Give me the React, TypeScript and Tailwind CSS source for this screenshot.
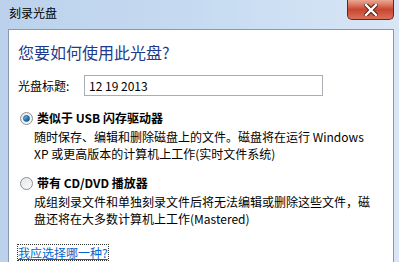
const font = { fontFamily: '"Noto Sans CJK SC", "Microsoft YaHei", sans-serif' }

function Radio({ checked }: { checked?: boolean }) {
  return (
    <div className="w-[13px] h-[13px] rounded-full border border-[#8a8f96] bg-gradient-to-br from-[#e4e6e8] to-[#fbfbfb] flex items-center justify-center shrink-0">
      {checked && (
        <div className="w-[7px] h-[7px] rounded-full bg-gradient-to-br from-[#8fd0f0] via-[#2a82c4] to-[#0e4f8a] border border-[#1d5b8f]" />
      )}
    </div>
  )
}

function CloseButton() {
  return (
    <div className="absolute top-0 right-[5px] w-[47px] h-[20px] rounded-b-[5px] border border-t-0 border-[#5a2a24] bg-gradient-to-b from-[#e9a895] via-[#c9452e] to-[#d9705b] flex items-center justify-center">
      <svg width="14" height="12" viewBox="0 0 14 12">
        <path d="M2 1 L12 11 M12 1 L2 11" stroke="#5a1c14" strokeWidth="4.4" strokeLinecap="square" />
        <path d="M2 1 L12 11 M12 1 L2 11" stroke="#ffffff" strokeWidth="2.4" strokeLinecap="square" />
      </svg>
    </div>
  )
}

export default function App() {
  return (
    <div
      className="relative w-[399px] h-[262px] overflow-hidden bg-gradient-to-r from-[#bcd2ec] via-[#c6dbf1] to-[#d8e6f6] text-[12px] text-black"
      style={font}
    >
      {/* Title bar */}
      <div className="h-[29px] flex items-center pl-[9px] pb-[3px] text-[12px] text-black">刻录光盘</div>
      <CloseButton />

      {/* Client area */}
      <div className="ml-[8px] w-[386px] h-[240px] border border-[#8798af] bg-white pl-[9px]">
        <div className="mt-[11px] text-[16px] leading-[22px] text-[#1e3a8c]">您要如何使用此光盘?</div>

        <div className="mt-[12px] flex items-center h-[21px]">
          <span className="w-[66px]">光盘标题:</span>
          <div className="w-[239px] h-[21px] border border-[#abadb3] flex items-center pl-[4px]">
            12 19 2013
          </div>
        </div>

        <div className="mt-[13px] flex items-center h-[18px] pl-[2px]">
          <Radio checked />
          <span className="ml-[4px] font-bold">类似于 USB 闪存驱动器</span>
        </div>
        <div className="pl-[16px] leading-[17px] mt-[1px]">
          <div>随时保存、编辑和删除磁盘上的文件。磁盘将在运行 Windows</div>
          <div>XP 或更高版本的计算机上工作(实时文件系统)</div>
        </div>

        <div className="mt-[12px] flex items-center h-[18px] pl-[2px]">
          <Radio />
          <span className="ml-[4px] font-bold">带有 CD/DVD 播放器</span>
        </div>
        <div className="pl-[16px] leading-[17px] mt-[1px]">
          <div>成组刻录文件和单独刻录文件后将无法编辑或删除这些文件，磁</div>
          <div>盘还将在大多数计算机上工作(Mastered)</div>
        </div>

        <div className="mt-[17px]">
          <span className="inline-block outline-1 outline-dotted outline-[#333] text-[#0066cc] underline leading-[15px]">我应选择哪一种?</span>
        </div>
      </div>
    </div>
  )
}
